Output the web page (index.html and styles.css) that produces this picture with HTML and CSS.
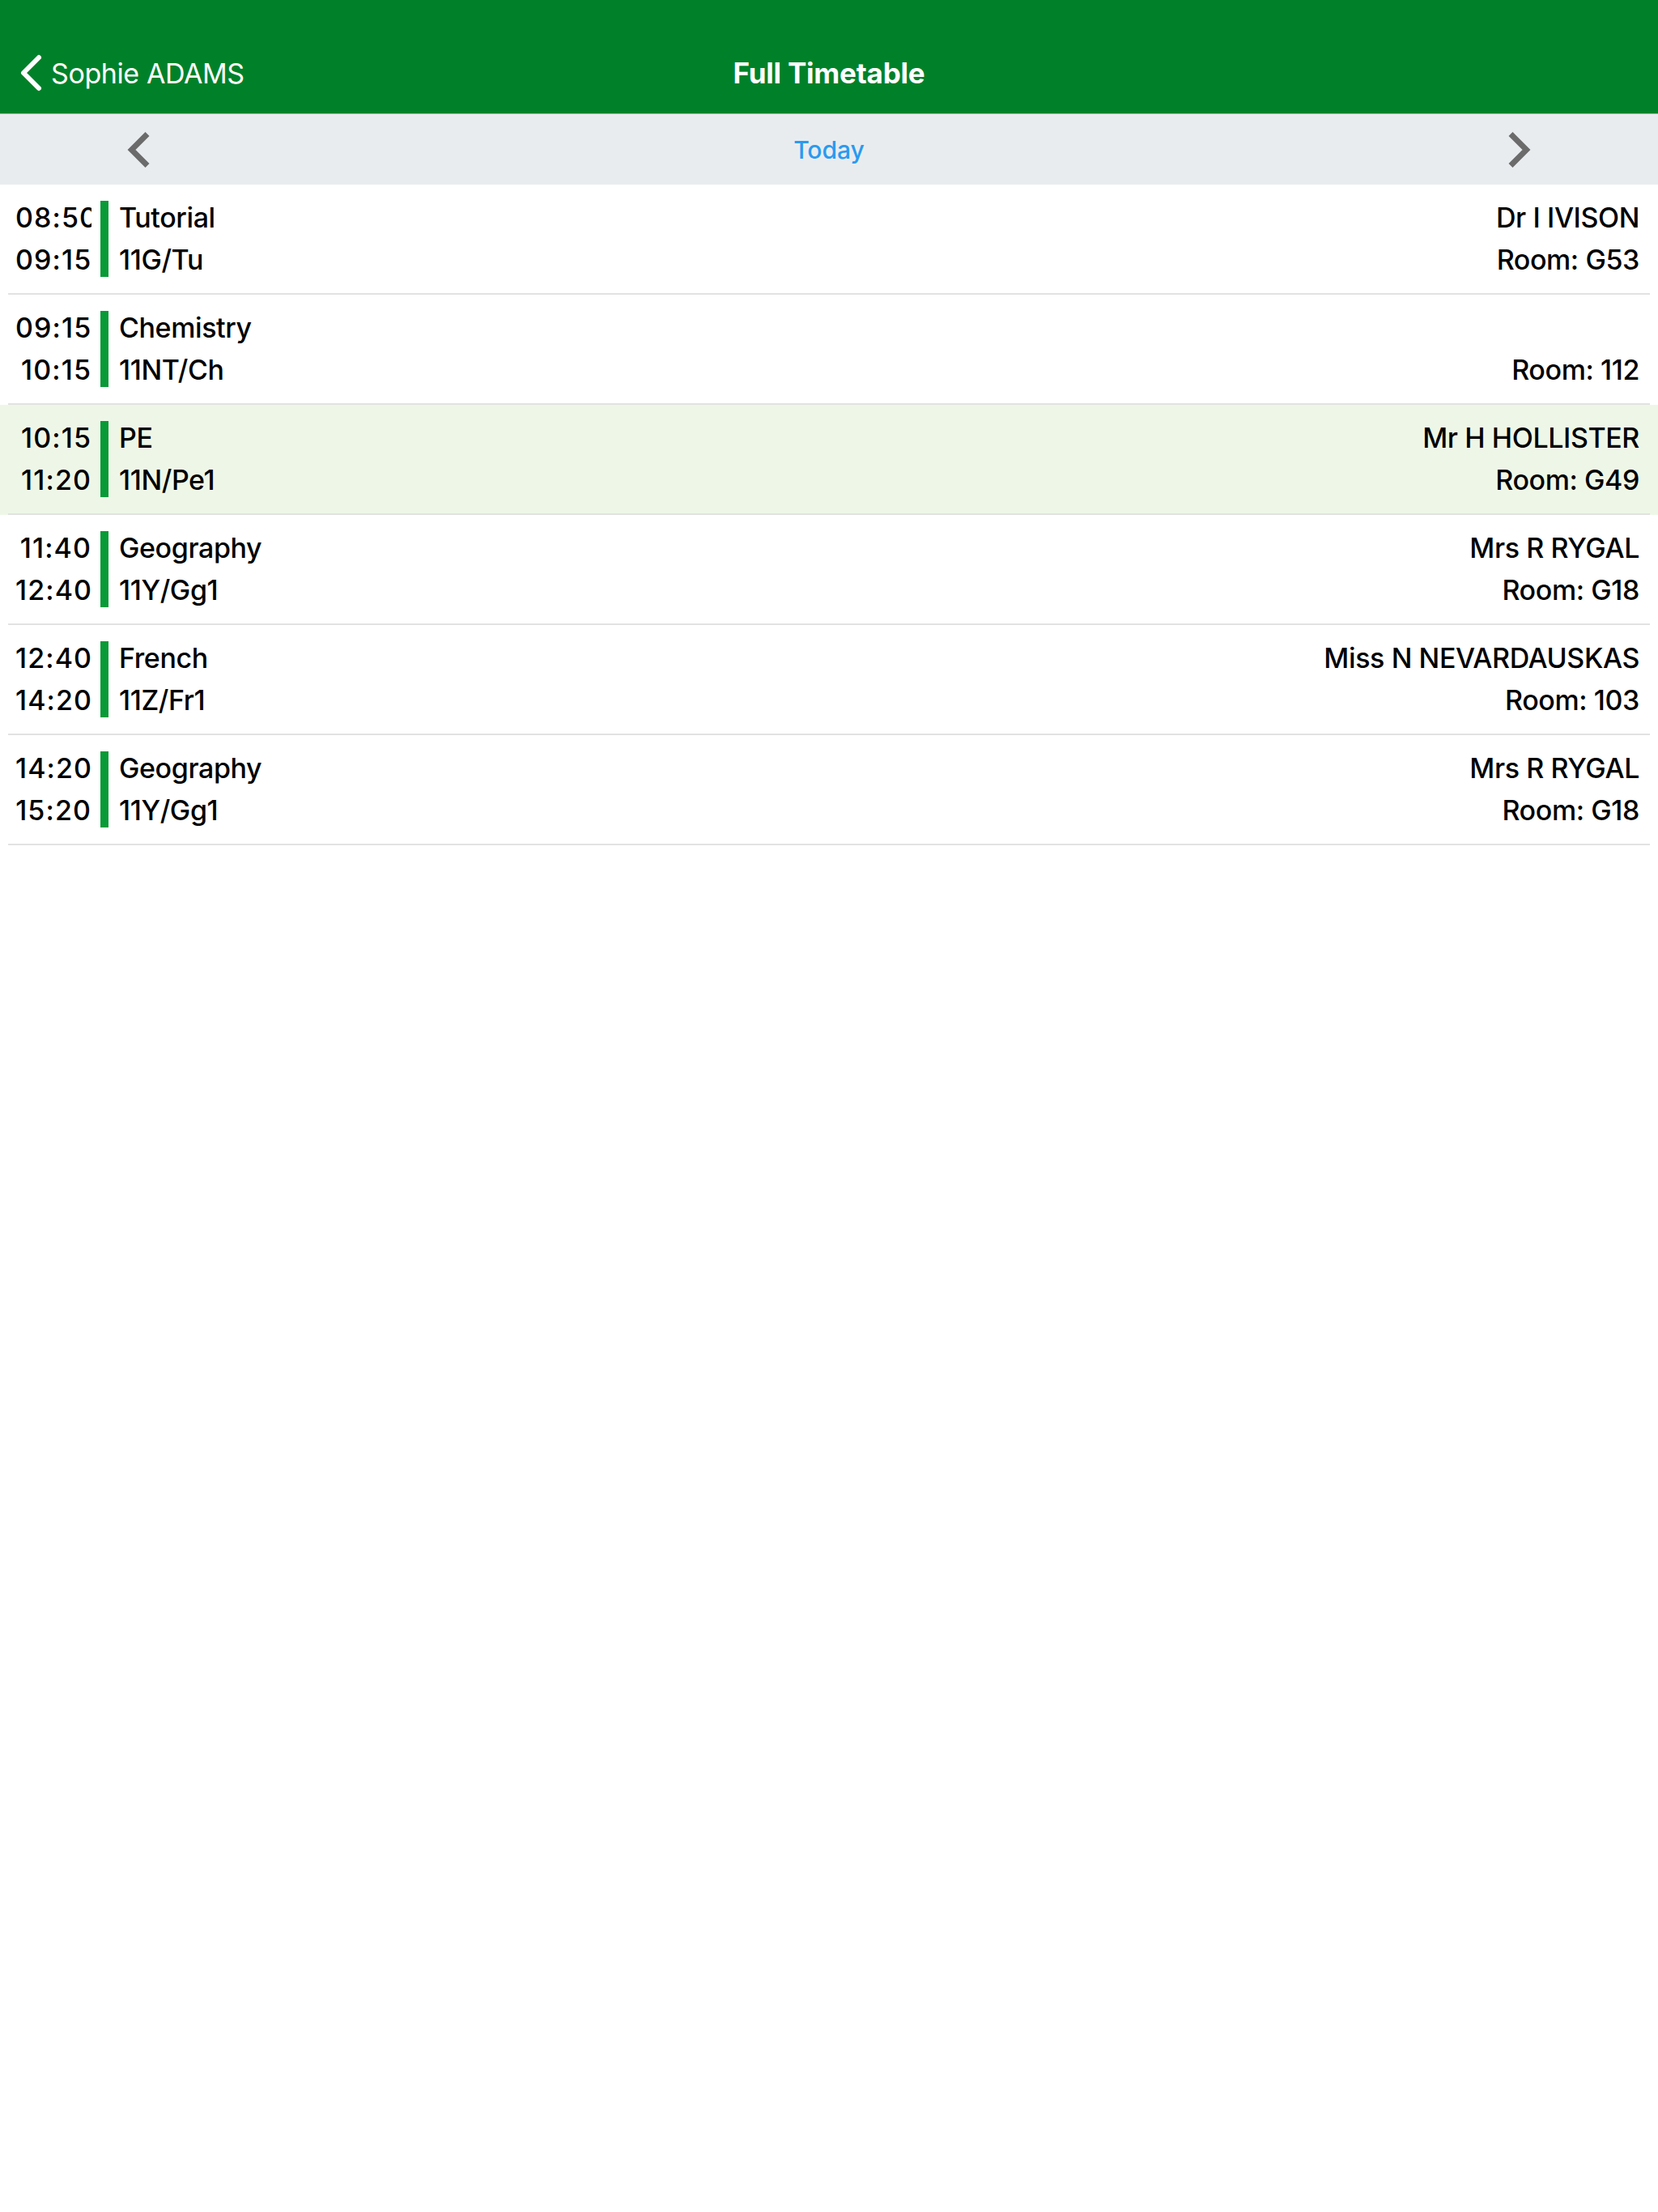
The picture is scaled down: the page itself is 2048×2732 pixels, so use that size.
FILE: index.html
```html
<!DOCTYPE html>
<html lang="en">
<head>
<meta charset="utf-8">
<title>Full Timetable</title>
<link rel="stylesheet" href="styles.css">
</head>
<body>
<header class="topbar">
  <a class="back" href="#">
    <svg class="back-icon" width="30" height="48" viewBox="0 0 30 48" aria-hidden="true">
      <polyline points="25,5 6,24 25,43" fill="none" stroke="#fff" stroke-width="6" stroke-linecap="round" stroke-linejoin="round"/>
    </svg>
    <span class="back-label">Sophie ADAMS</span>
  </a>
  <h1 class="title">Full Timetable</h1>
  <span class="spacer"></span>
</header>

<nav class="daybar">
  <button class="arrow" aria-label="Previous day">
    <svg width="28" height="44" viewBox="0 0 28 44" aria-hidden="true">
      <polyline points="25,2.5 5.5,22 25,41.5" fill="none" stroke="#6b6b6b" stroke-width="7" stroke-linecap="butt" stroke-linejoin="miter"/>
    </svg>
  </button>
  <span class="today">Today</span>
  <button class="arrow" aria-label="Next day">
    <svg width="28" height="44" viewBox="0 0 28 44" aria-hidden="true">
      <polyline points="3,2.5 22.5,22 3,41.5" fill="none" stroke="#6b6b6b" stroke-width="7" stroke-linecap="butt" stroke-linejoin="miter"/>
    </svg>
  </button>
</nav>

<main class="lessons">
  <div class="lesson">
    <div class="times"><div>08:50</div><div>09:15</div></div>
    <div class="bar"></div>
    <div class="subject"><div>Tutorial</div><div>11G/Tu</div></div>
    <div class="details"><div>Dr I IVISON</div><div>Room: G53</div></div>
  </div>
  <div class="lesson">
    <div class="times"><div>09:15</div><div>10:15</div></div>
    <div class="bar"></div>
    <div class="subject"><div>Chemistry</div><div>11NT/Ch</div></div>
    <div class="details"><div></div><div>Room: 112</div></div>
  </div>
  <div class="lesson current">
    <div class="times"><div>10:15</div><div>11:20</div></div>
    <div class="bar"></div>
    <div class="subject"><div>PE</div><div>11N/Pe1</div></div>
    <div class="details"><div>Mr H HOLLISTER</div><div>Room: G49</div></div>
  </div>
  <div class="lesson">
    <div class="times"><div>11:40</div><div>12:40</div></div>
    <div class="bar"></div>
    <div class="subject"><div>Geography</div><div>11Y/Gg1</div></div>
    <div class="details"><div>Mrs R RYGAL</div><div>Room: G18</div></div>
  </div>
  <div class="lesson">
    <div class="times"><div>12:40</div><div>14:20</div></div>
    <div class="bar"></div>
    <div class="subject"><div>French</div><div>11Z/Fr1</div></div>
    <div class="details"><div>Miss N NEVARDAUSKAS</div><div>Room: 103</div></div>
  </div>
  <div class="lesson">
    <div class="times"><div>14:20</div><div>15:20</div></div>
    <div class="bar"></div>
    <div class="subject"><div>Geography</div><div>11Y/Gg1</div></div>
    <div class="details"><div>Mrs R RYGAL</div><div>Room: G18</div></div>
  </div>
</main>
</body>
</html>
```

FILE: styles.css
```css
* {
  box-sizing: border-box;
}

html, body {
  margin: 0;
  padding: 0;
  background: #ffffff;
}

body {
  font-family: Inter, "Noto Sans", "Liberation Sans", sans-serif;
  color: #000000;
  width: 2048px;
  min-height: 2732px;
}

/* ---------- green navigation header ---------- */
.topbar {
  height: 140px;
  padding-top: 40px;
  background: #008129;
  display: grid;
  grid-template-columns: 1fr auto 1fr;
  align-items: center;
  color: #ffffff;
}

.back {
  display: flex;
  align-items: center;
  padding-left: 23px;
  color: #ffffff;
  text-decoration: none;
}

.back-icon {
  display: block;
  margin-right: 10px;
}

.back-label {
  font-size: 34px;
  letter-spacing: -0.4px;
}

.title {
  margin: 0;
  font-size: 35px;
  font-weight: 700;
  letter-spacing: -0.2px;
}

/* ---------- day switcher ---------- */
.daybar {
  height: 88px;
  border-top: 1px solid #aab1aa;
  background: #e9ecef;
  display: flex;
  align-items: center;
  justify-content: space-between;
  padding: 0 157px;
}

.arrow {
  border: 0;
  padding: 0;
  background: none;
  display: block;
  width: 28px;
  height: 44px;
}

.arrow svg {
  display: block;
}

.today {
  color: #2a9af0;
  font-size: 30px;
  font-weight: 500;
}

/* ---------- lesson rows ---------- */
.lesson {
  display: flex;
  height: 136px;
  padding: 15px 23px 17px 19px;
  font-size: 34px;
  font-weight: 450;
  line-height: 52px;
  letter-spacing: -0.4px;
  background: linear-gradient(#e2e2e2, #e2e2e2) no-repeat 10px 100% / calc(100% - 20px) 2px;
}

.lesson.current {
  background:
    linear-gradient(#e2e2e2, #e2e2e2) no-repeat 10px 100% / calc(100% - 20px) 2px,
    #eef7e7;
}

/* start/end times: right-aligned; a value wider than the column runs past its edge and is cut */
.times {
  width: 94px;
  overflow: hidden;
  white-space: nowrap;
  text-align: right;
  letter-spacing: 1.1px;
}

.bar {
  width: 10px;
  margin: 5px 13px 5px 11px;
  background: #089a37;
}

.subject {
  flex: 1;
  white-space: nowrap;
}

.details {
  text-align: right;
  white-space: nowrap;
}

.details div {
  min-height: 52px;
}
```
